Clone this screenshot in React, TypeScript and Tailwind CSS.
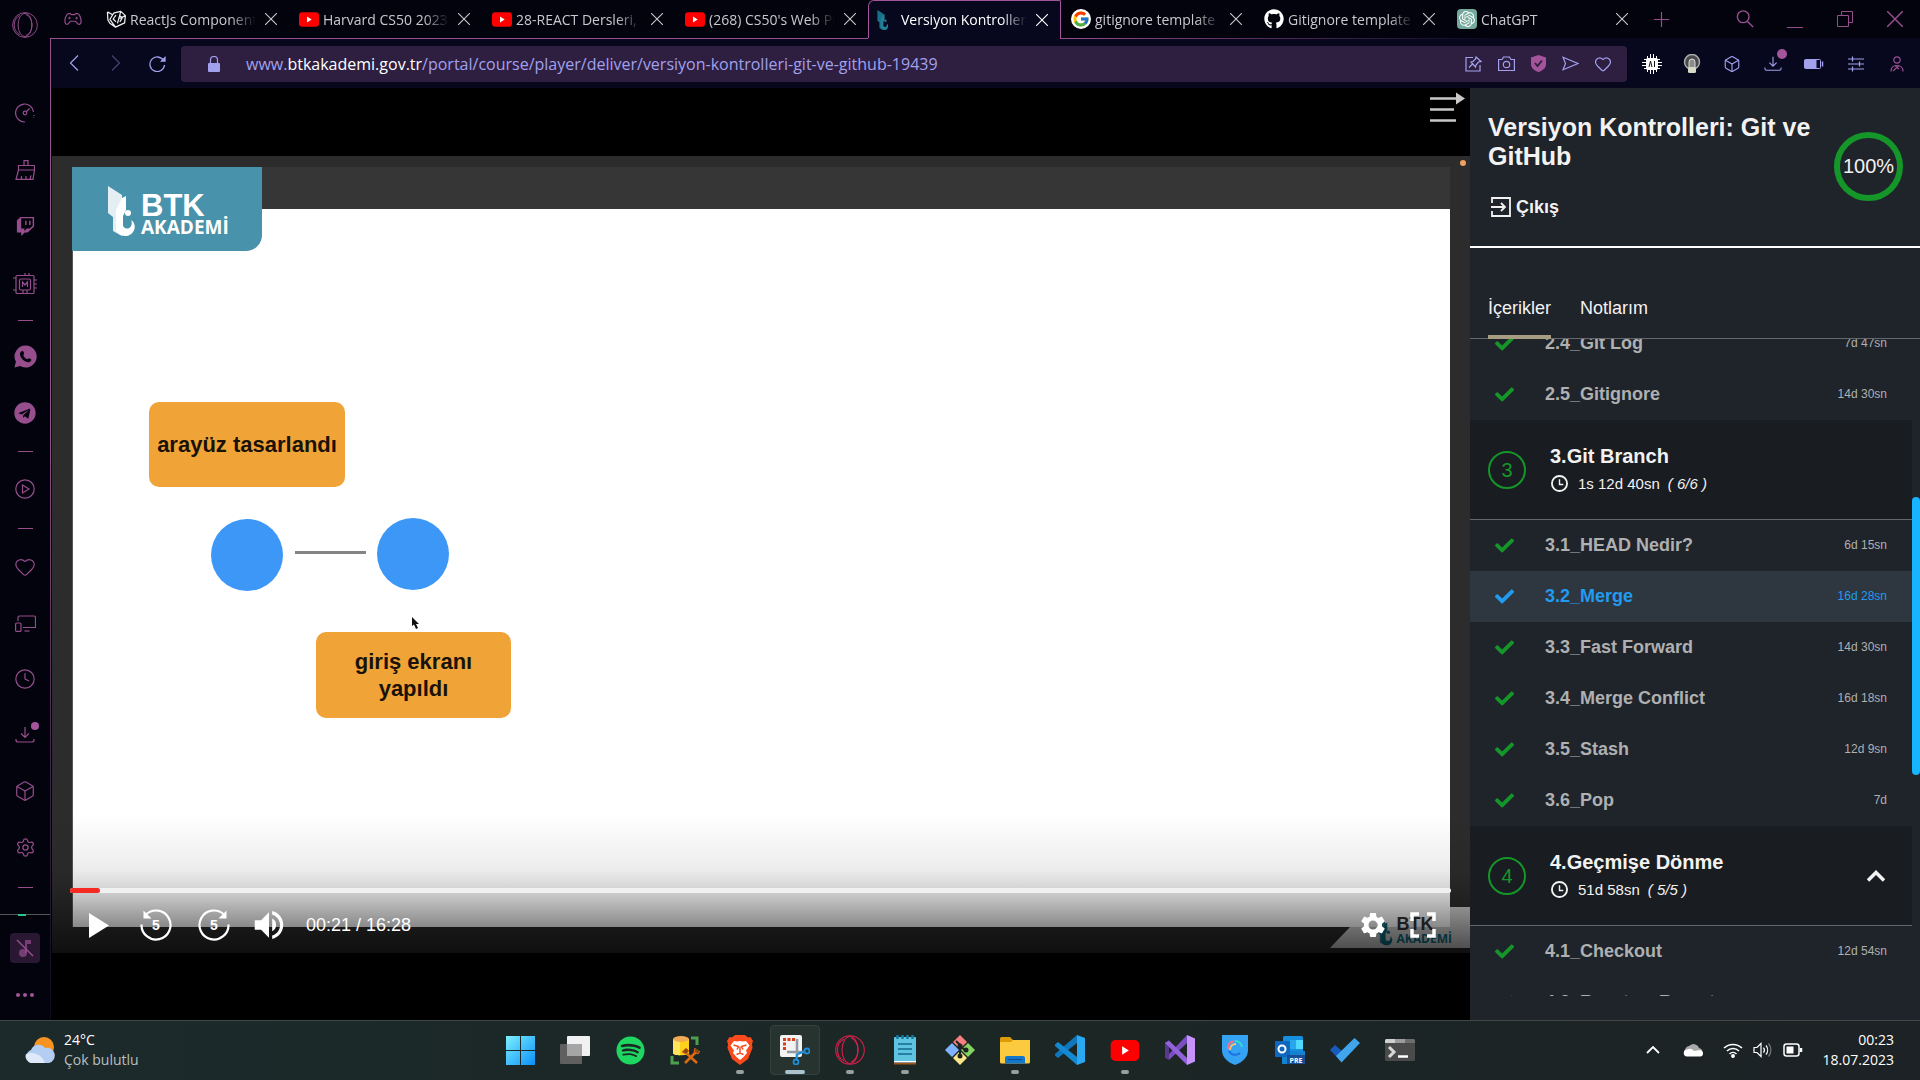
import React from "react";
import { FcGoogle } from "react-icons/fc";
import { FaGithub, FaSpotify, FaTelegram, FaTwitch, FaCheck } from "react-icons/fa";
import { SiOpenai } from "react-icons/si";
import { MdSettings, MdVolumeUp } from "react-icons/md";
import { Heart, Box, Clock, Settings } from "lucide-react";

type P = { className?: string };

const OperaRing = ({ className = "" }: P) => (
  <svg viewBox="0 0 30 30" className={className} fill="none" stroke="currentColor" strokeWidth="1.1">
    <circle cx="15" cy="15" r="14.300" />
    <ellipse cx="15" cy="15" rx="8" ry="13.500" />
    <path d="M16 3c4 1 7 6 7 12s-3 11-7 12M9 4c-4 2-6.500 6-6.500 11s2.500 9 6.500 11" />
  </svg>
);

const Gamepad = () => (
  <svg viewBox="0 0 20 14" className="h-[14px] w-[18px] text-[#964e8d]" fill="none" stroke="currentColor" strokeWidth="1.3">
    <path d="M5 1h2l1.200 1.200h3.600L13 1h2c2 0 4 5 4 8.500 0 2-1 3.500-2.500 3.500S14 10 12.500 9.500h-5C6 10 5 13 3.500 13S1 11.500 1 9.500C1 6 3 1 5 1Z" />
    <path d="M4.500 6h3M6 4.500v3M12.500 6h3M14 4.500v3" strokeWidth="1" />
  </svg>
);

const CodeLogo = () => (
  <svg viewBox="0 0 22 20" className="h-5 w-[21px]" fill="none" stroke="#f1f1f1" strokeWidth="1.300" strokeLinejoin="round">
    <path d="M1.500 2.500 7 5.500 4 10.500l6 8 9.500-4.500.8-7.500-4.800-4.500-7 1.500L7 5.500M1.500 2.500 2 11l2 3.500 6 4M20.300 6.500l-6 3M15.500 2 12 14.500M10.500 6 7.500 10l3 3M14.500 6.500 17 9l-2.500 4" />
  </svg>
);

const YouTube = ({ className = "" }: P) => (
  <svg viewBox="0 0 30 22" className={className}>
    <rect width="30" height="22" rx="5" fill="#f00" />
    <path d="m12 6.500 7 4.500-7 4.500z" fill="#fff" />
  </svg>
);

const BtkMark = ({ className = "" }: P) => (
  <svg viewBox="0 0 28 50" className={className} fill="currentColor">
    <path d="M0 0v27l5 4v14l9 5V9z" opacity=".85" />
    <path d="M14 12l4-2v14l-3 6v9c0 4 6 5 8 1 1-2 1-4 0-6 4 2 5 8 2 12-4 6-13 5-17-1V24z" />
    <circle cx="20" cy="27" r="3" />
  </svg>
);

const CloseX = ({ className = "" }: P) => (
  <svg viewBox="0 0 12 12" className={className} stroke="currentColor" strokeWidth="1.100">
    <path d="m0 0 12 12M12 0 0 12" />
  </svg>
);

const tabs: { title: string; icon: React.ReactNode; active?: boolean }[] = [
  { title: "ReactJs Component", icon: <CodeLogo /> },
  { title: "Harvard CS50 2023 –", icon: <YouTube className="h-[15px] w-5" /> },
  { title: "28-REACT Dersleri, R", icon: <YouTube className="h-[15px] w-5" /> },
  { title: "(268) CS50's Web Pr", icon: <YouTube className="h-[15px] w-5" /> },
  { title: "Versiyon Kontrolleri:", icon: <BtkMark className="h-5 w-3 text-[#1f8299]" />, active: true },
  { title: "gitignore template -", icon: <span className="rounded-full bg-white p-px"><FcGoogle size={18} /></span> },
  { title: "Gitignore template f", icon: <FaGithub size={20} color="#fff" /> },
  {
    title: "ChatGPT",
    icon: (
      <span className="flex h-5 w-5 items-center justify-center rounded bg-[#74aa9c]">
        <SiOpenai size={16} color="#fff" />
      </span>
    ),
  },
];

const TabStrip = () => (
  <>
    <div className="flex h-[38px] items-stretch">
      <button aria-label="GX Corner" className="flex w-[46px] items-center justify-center"><Gamepad /></button>
      {tabs.map((t) => (
        <div
          key={t.title}
          className={
            t.active
              ? "flex w-[193px] items-center rounded-tl-[6px] rounded-tr-[2px] border-x border-t border-[#a4549a] bg-[#07071d] pl-2 text-white"
              : "flex w-[193px] items-center pl-[10px] text-[#c9c9cd]"
          }
        >
          <span className="flex w-6 shrink-0 items-center">{t.icon}</span>
          <span className="w-[126px] overflow-hidden whitespace-nowrap text-[14px] [mask-image:linear-gradient(to_right,#000_80%,transparent)]">
            {t.title}
          </span>
          <button aria-label="Sekmeyi kapat" className="ml-2 p-px"><CloseX className="h-3 w-3" /></button>
        </div>
      ))}
      <button aria-label="Yeni sekme" className="ml-[14px] text-[#964e8d]">
        <svg viewBox="0 0 15 15" className="h-[15px] w-[15px]" stroke="currentColor" strokeWidth="1.200"><path d="M7.500 0v15M0 7.500h15" /></svg>
      </button>
      <div className="ml-auto flex items-center text-[#964e8d]">
        <button aria-label="Ara" className="flex w-[50px] justify-center">
          <svg viewBox="0 0 20 20" className="h-[18px] w-[18px]" fill="none" stroke="currentColor" strokeWidth="1.600"><circle cx="8" cy="7.500" r="6.500" /><path d="m12.500 12.500 6.500 6.500" /></svg>
        </button>
        <button aria-label="Küçült" className="flex h-6 w-[50px] items-end justify-center pb-[3px]"><span className="h-px w-4 bg-[#964e8d]" /></button>
        <button aria-label="Geri yükle" className="flex w-[50px] justify-center">
          <svg viewBox="0 0 16 16" className="h-4 w-4" fill="none" stroke="currentColor"><path d="M.5 4.500h11v11H.5zM4.500 4.500v-4h11v11h-4" /></svg>
        </button>
        <button aria-label="Kapat" className="flex w-[50px] justify-center"><CloseX className="h-4 w-4" /></button>
      </div>
    </div>
    <div className="flex h-px bg-[#07071d]">
      <div className="w-[818px] bg-[#964e8d]" />
      <div className="w-[192px]" />
      <div className="w-[440px] bg-linear-to-r from-[#964e8d] to-transparent" />
    </div>
  </>
);

const Download = ({ className = "" }: P) => (
  <svg viewBox="0 0 20 20" className={className} fill="none" stroke="currentColor" strokeWidth="1.200">
    <path d="M10 2v10M6 8.500l4 4 4-4M1 14v1a2 2 0 0 0 2 2h14a2 2 0 0 0 2-2v-1" />
  </svg>
);

const Toolbar = () => (
  <div className="flex h-[49px] items-center bg-[#07071d] text-[#a1a1ee]">
    <div className="flex w-[130px] items-center pb-px pl-[14px]">
      <button aria-label="Geri" className="flex w-10 justify-start pl-1">
        <svg viewBox="0 0 10 16" className="h-4 w-[10px]" fill="none" stroke="currentColor" strokeWidth="1.200"><path d="M9 .5 1.500 8 9 15.500" /></svg>
      </button>
      <button aria-label="İleri" className="flex w-11 justify-start pl-[6px] opacity-40">
        <svg viewBox="0 0 10 16" className="h-4 w-[10px]" fill="none" stroke="currentColor" strokeWidth="1.200"><path d="M1 .5 8.500 8 1 15.500" /></svg>
      </button>
      <button aria-label="Yenile">
        <svg viewBox="0 0 17 17" className="h-[17px] w-[17px]" fill="none" stroke="currentColor" strokeWidth="1.300"><path d="M14.500 5.500A7.300 7.300 0 1 0 15.500 10" /><path d="M12.500 6H16V2.500z" fill="currentColor" /></svg>
      </button>
    </div>
    <div className="flex h-9 flex-1 items-center rounded-[4px] bg-[#2e1e3f] pl-[27px] pr-2">
      <svg viewBox="0 0 12 16" className="mr-[26px] h-4 w-3"><rect y="7" width="12" height="9" rx="1" fill="currentColor" /><path d="M2.500 7V4a3.500 3.500 0 0 1 7 0v3" fill="none" stroke="currentColor" strokeWidth="1.200" /></svg>
      <p className="flex-1 whitespace-nowrap text-[16px]">
        www.<span className="text-white">btkakademi.gov.tr</span>/portal/course/player/deliver/versiyon-kontrolleri-git-ve-github-19439
      </p>
      <div className="flex items-center">
        <button aria-label="Sabitle" className="flex w-[33px] justify-center">
          <svg viewBox="0 0 17 16" className="h-4 w-[17px]" fill="none" stroke="currentColor" strokeWidth="1.200"><path d="M8 1.500H1v13.500h14V9M4 11.500 8 7.500M11 1l5 4.500-2.500.5L11 9l-.5 2L6 6l2-.500L10.500 3z" /></svg>
        </button>
        <button aria-label="Ekran görüntüsü" className="flex w-8 justify-center">
          <svg viewBox="0 0 17 15" className="h-[15px] w-[17px]" fill="none" stroke="currentColor" strokeWidth="1.200"><path d="M.6 3.500h3.500L5.500 1h6l1.400 2.500h3.500v11H.6z" /><circle cx="8.500" cy="8.500" r="3.200" /></svg>
        </button>
        <button aria-label="Reklam engelleyici" className="flex w-8 justify-center">
          <svg viewBox="0 0 15 17" className="h-[17px] w-[15px]" fill="none"><path d="M7.500 0 15 2.500V9c0 4-3 6.500-7.500 8C3 15.500 0 13 0 9V2.500z" fill="#a4549a" /><path d="m4 8 2.500 3L11 5.500" stroke="#2e1e3f" strokeWidth="1.800" /></svg>
        </button>
        <button aria-label="Gönder" className="flex w-[33px] justify-center">
          <svg viewBox="0 0 17 15" className="h-[15px] w-[17px]" fill="none" stroke="currentColor" strokeWidth="1.200"><path d="M1 1.200 16 7.500 1 13.800l2.500-6.300z" /></svg>
        </button>
        <button aria-label="Yer imi" className="flex w-8 justify-center"><Heart size={18} strokeWidth={1.600} /></button>
      </div>
    </div>
    <div className="flex items-center pl-1 pr-[3px]">
      <button aria-label="AI" className="flex w-[41px] justify-center">
        <svg viewBox="0 0 20 20" className="h-5 w-5" stroke="#fff" strokeWidth="1"><path d="M5.500 2v16M8.500 0v20M11.500 0v20M14.500 2v16M2 5.500h16M0 8.500h20M0 11.500h20M2 14.500h16" /><rect x="4.500" y="4.500" width="11" height="11" rx="1" fill="#fff" /><path d="m7 13 1.500-6L10 13M12.500 7v6" stroke="#111" fill="none" /></svg>
      </button>
      <button aria-label="Ampul" className="flex w-10 justify-center">
        <svg viewBox="0 0 18 20" className="h-5 w-[18px]"><circle cx="9" cy="8" r="7.500" fill="#4a4a4a" stroke="#aaa" strokeWidth="1.500" /><path d="M6 14V8a3 3 0 0 1 6 0v6z" fill="#8c8c8c" stroke="#d9d9d9" /><rect x="5" y="13" width="8" height="6" rx="1.500" fill="#d9d9c8" /></svg>
      </button>
      <button aria-label="Uzantılar" className="flex w-10 justify-center"><Box size={18} strokeWidth={1.500} /></button>
      <button aria-label="İndirilenler" className="relative flex w-[41px] justify-center">
        <Download className="h-[18px] w-[18px]" />
        <span className="absolute -top-[6px] right-[6px] h-[10px] w-[10px] rounded-full bg-[#a4549a]" />
      </button>
      <button aria-label="Pil" className="flex w-[41px] justify-center">
        <svg viewBox="0 0 20 10" className="h-[10px] w-5" fill="none" stroke="currentColor"><rect x=".5" y=".5" width="16" height="9" rx="1" /><path d="M1 1h11v8H1z" fill="currentColor" /><path d="M18.500 2.500v5" strokeWidth="1.500" /></svg>
      </button>
      <button aria-label="Ayarlar" className="flex w-[43px] justify-center">
        <svg viewBox="0 0 16 16" className="h-4 w-4" stroke="currentColor" strokeWidth="1.200"><path d="M0 3h16M0 8h16M0 13h16M4.500.5v5M11.500 5.500v5M4.500 10.500v5" /></svg>
      </button>
      <button aria-label="Profil" className="flex w-10 justify-center text-[#964e8d]">
        <svg viewBox="0 0 14 16" className="h-4 w-[14px]" fill="none" stroke="currentColor" strokeWidth="1.200"><circle cx="7" cy="4" r="3.200" /><path d="M1 15.500c0-4 2-6 6-6s6 2 6 6M5 9.500 9 13M9 9.500 3 15" /></svg>
      </button>
    </div>
  </div>
);

const Dash = ({ className = "" }: P) => (
  <div className={"flex items-center justify-center " + className}><span className="h-px w-[15px] bg-[#964e8d]" /></div>
);

const SideBtn = ({ label, tall, children }: { label: string; tall?: boolean; children: React.ReactNode }) => (
  <button aria-label={label} className={tall ? "flex h-[57px] w-full items-center justify-center" : "flex h-14 w-full items-center justify-center"}>
    {children}
  </button>
);

const Sidebar = () => (
  <aside className="flex w-[50px] shrink-0 flex-col bg-[#03030e] text-[#964e8d]">
    <button aria-label="Opera GX" className="flex h-[84px] items-start justify-center pt-3"><OperaRing className="h-[26px] w-[26px]" /></button>
    <SideBtn label="GX Control" tall>
      <svg viewBox="0 0 20 20" className="h-5 w-5" fill="none" stroke="currentColor" strokeWidth="1.200"><path d="M10 19A9 9 0 1 1 18.500 9" /><circle cx="10" cy="10" r="1.800" /><path d="m11.500 8.500 3-3M19 12v1M18.500 14.500v.5" /></svg>
    </SideBtn>
    <SideBtn label="Temizleyici" tall>
      <svg viewBox="0 0 20 20" className="h-5 w-5" fill="none" stroke="currentColor" strokeWidth="1.200"><path d="M9 5V.6h4V5M3.500 5.500h16V10h-16zM3.500 10 1 19.400h17l1.500-9.400M6.500 19.400V16M11 19.400V16M15 19.400l1-4" /></svg>
    </SideBtn>
    <SideBtn label="Twitch" tall>
      <FaTwitch size={19} />
    </SideBtn>
    <SideBtn label="Mods" tall>
      <svg viewBox="0 0 24 24" className="h-6 w-6" fill="none" stroke="currentColor" strokeWidth="1.200"><rect x="3" y="3.500" width="18" height="18" rx="1" /><rect x="6.500" y="7" width="11" height="11" rx="1.500" /><path d="M9.500 15v-5l2.500 3 2.500-3v5M12 3.500V1M16 3.500V1M21 8h3M21 12h3M21 16h3M3 6H0M3 18H0M10 21.500V18M14 21.500V18" /></svg>
    </SideBtn>
    <Dash className="h-4" />
    <SideBtn label="WhatsApp" tall>
      <svg viewBox="0 0 24 24" className="h-[23px] w-[23px]"><path d="M12.500.5a11.500 11.500 0 1 1-6 21.500L.500 23.500 2 17.500A11.500 11.500 0 0 1 12.500.5Z" fill="currentColor" /><path d="M8 6.500c1-.800 2 0 2.500 2 .3 1-.800 1.200-.8 2 .5 1.700 2 3.500 4 4.300 1 .2 1.200-1.300 2-1 1.800.7 2.800 1.200 2.300 2.200-1.200 2.500-3.500 2.500-6 1.300-3-1.500-5.500-4.500-5.800-7.300 0-1.800.6-2.700 1.800-3.500Z" fill="#03030e" /></svg>
    </SideBtn>
    <SideBtn label="Telegram"><FaTelegram size={22} /></SideBtn>
    <Dash className="h-5" />
    <SideBtn label="Oynatıcı">
      <svg viewBox="0 0 20 20" className="h-5 w-5" fill="none" stroke="currentColor" strokeWidth="1.200"><circle cx="10" cy="10" r="9.200" /><path d="m7.500 6 6.500 4-6.500 4z" /></svg>
    </SideBtn>
    <Dash className="h-[22px]" />
    <SideBtn label="Yer imleri"><Heart size={22} strokeWidth={1.300} /></SideBtn>
    <SideBtn label="Flow">
      <svg viewBox="0 0 21 17" className="h-[17px] w-[21px]" fill="none" stroke="currentColor" strokeWidth="1.200"><path d="M3 6V2.500A1.500 1.500 0 0 1 4.500 1H19a1.500 1.500 0 0 1 1.500 1.500v10H8" /><rect x=".6" y="8" width="5.400" height="8.400" rx="1" /><path d="M9.500 16h5" /></svg>
    </SideBtn>
    <SideBtn label="Geçmiş"><Clock size={22} strokeWidth={1.300} /></SideBtn>
    <button aria-label="İndirilenler" className="relative flex h-14 w-full items-center justify-center">
      <Download className="h-5 w-5" />
      <span className="absolute right-[11px] top-[15px] h-2 w-2 rounded-full bg-[#a4549a]" />
    </button>
    <SideBtn label="Uzantılar"><Box size={22} strokeWidth={1.300} /></SideBtn>
    <SideBtn label="Ayarlar"><Settings size={21} strokeWidth={1.400} /></SideBtn>
    <Dash className="h-[24px]" />
    <div className="mt-[15px] h-px bg-[#55555c]"><div className="ml-[18px] h-[2px] w-2 bg-[#2bc48a]" /></div>
    <button aria-label="Müziği aç" className="mx-auto mt-[18px] flex h-[30px] w-[30px] items-center justify-center rounded-[4px] bg-[#2a1833]">
      <svg viewBox="0 0 18 18" className="h-[18px] w-[18px]"><circle cx="7" cy="14" r="4" fill="currentColor" opacity=".7" /><path d="M9 14V1h6v4h-4v9z" fill="currentColor" opacity=".7" /><path d="m1 1 16 16" stroke="#964e8d" strokeWidth="1.500" /></svg>
    </button>
    <button aria-label="Daha fazla" className="mx-auto mt-[30px] flex gap-[3px]">
      <span className="h-1 w-1 rounded-full bg-[#a4549a]" /><span className="h-1 w-1 rounded-full bg-[#a4549a]" /><span className="h-1 w-1 rounded-full bg-[#a4549a]" />
    </button>
  </aside>
);

const Skip = ({ flip }: { flip?: boolean }) => (
  <svg viewBox="0 0 32 32" className="h-8 w-8">
    <g transform={flip ? "translate(32 0) scale(-1 1)" : undefined}>
      <path d="M1.500 15.500A14.500 14.500 0 1 0 6 5.500" fill="none" stroke="#fff" strokeWidth="2.200" />
      <path d="M3.500 1.500v8h8z" fill="#fff" />
    </g>
    <text x="16" y="21" textAnchor="middle" fontSize="14" fontWeight="700" fill="#fff">5</text>
  </svg>
);

const Video = () => (
  <main className="relative flex min-w-0 flex-1 items-center bg-black pt-px font-['Liberation_Sans',sans-serif]">
    <button aria-label="Menü" className="absolute right-[5px] top-1 z-10">
      <svg viewBox="0 0 36 32" className="h-8 w-9" fill="none" stroke="#c8c8c8" strokeWidth="2.500"><path d="M1 6.500h27M1 17.500h24M1 28.500h26" /><path d="M27 .5l9 6-9 6z" fill="#c8c8c8" stroke="none" /></svg>
    </button>
    <div className="relative aspect-video w-full overflow-hidden bg-[#2c2c2c]">
      <div className="flex h-full flex-col px-5 pb-[26px] pt-[11px]">
        <div className="h-[42px] bg-[#363636]" />
        <div className="flex-1 border-l border-[#555] bg-white" />
      </div>
      <div className="absolute left-5 top-[11px] flex h-[84px] w-[190px] items-start rounded-br-[16px] bg-[#4893ab] pl-9 pt-[19px] text-white">
        <BtkMark className="h-[50px] w-7" />
        <div className="ml-[5px] mt-[6px] font-bold">
          <p className="text-[31px] leading-7">BTK</p>
          <p className="font-['Open_Sans',sans-serif] text-[19px] leading-[14px]">AKADEMİ</p>
        </div>
      </div>
      <span className="absolute right-1 top-1 h-[6px] w-[6px] rounded-full bg-[#f0a060]" />
      <div className="absolute left-[97px] top-[246px] flex h-[85px] w-[196px] items-center justify-center rounded-[10px] bg-[#f0a437] text-[22px] font-bold text-[#1a1208]">arayüz tasarlandı</div>
      <div className="absolute left-[159px] top-[363px] h-[72px] w-[72px] rounded-full bg-[#3d97f7]" />
      <div className="absolute left-[243px] top-[395px] h-[3px] w-[71px] bg-[#858585]" />
      <div className="absolute left-[325px] top-[362px] h-[72px] w-[72px] rounded-full bg-[#3d97f7]" />
      <svg viewBox="0 0 8 12" className="absolute left-[360px] top-[461px] h-3 w-2"><path d="M0 0v9l2-1.500L4 12l2-1-2-4h3z" fill="#111" /></svg>
      <div className="absolute left-[264px] top-[476px] flex h-[86px] w-[195px] items-center justify-center rounded-[10px] bg-[#f0a437] text-center text-[22px] font-bold leading-[27px] text-[#1a1208]">
        giriş ekranı<br />yapıldı
      </div>
      <svg viewBox="0 0 140 42" className="absolute bottom-1 right-0 h-[42px] w-[140px]"><path d="M20 20h100V0h20v41H0z" fill="#cfcfcf" /></svg>
      <div className="absolute bottom-[6px] right-[18px] flex items-center text-[#0d6a7d]">
        <BtkMark className="h-8 w-4" />
        <div className="ml-1 font-bold">
          <p className="text-[18px] leading-4 text-[#333]">BTK</p>
          <p className="font-['Open_Sans',sans-serif] text-[12px] leading-[14px]">AKADEMİ</p>
        </div>
      </div>
      <div className="absolute inset-x-0 bottom-0 h-[140px] bg-[linear-gradient(to_bottom,transparent,rgba(0,0,0,0.05)_30%,rgba(0,0,0,0.08)_41%,rgba(0,0,0,0.17)_54%,rgba(0,0,0,0.46)_81%,rgba(0,0,0,0.65))]" />
      <div className="absolute inset-x-0 bottom-0 pb-[12px] pl-[18px] pr-[19px] text-white">
        <div className="h-[5px] rounded-full bg-[#f1f1f1]"><div className="h-[5px] w-[30px] rounded-full bg-[#f52a22]" /></div>
        <div className="mt-4 flex h-8 items-center">
          <button aria-label="Oynat" className="ml-[19px] w-5"><svg viewBox="0 0 20 25" className="h-[25px] w-5"><path d="M0 0v25l20-12.500z" fill="#fff" /></svg></button>
          <button aria-label="5 saniye geri" className="ml-[31px]"><Skip /></button>
          <button aria-label="5 saniye ileri" className="ml-[26px]"><Skip flip /></button>
          <button aria-label="Ses" className="ml-5"><MdVolumeUp size={38} /></button>
          <span className="ml-[18px] text-[18px]">00:21 / 16:28</span>
          <button aria-label="Ayarlar" className="ml-auto"><MdSettings size={30} /></button>
          <button aria-label="Tam ekran" className="ml-[22px] mr-[15px]">
            <svg viewBox="0 0 26 26" className="h-[26px] w-[26px]" fill="none" stroke="#fff" strokeWidth="3.500"><path d="M2 9V2h7M17 2h7v7M24 17v7h-7M9 24H2v-7" /></svg>
          </button>
        </div>
      </div>
    </div>
  </main>
);

const Lesson = ({ name, time, active }: { name: string; time: string; active?: boolean }) => (
  <li>
    <a
      href="#ders"
      className={
        active
          ? "flex h-[51px] items-center bg-[#2e3740] pl-[25px] pr-[25px] text-[#219bf0]"
          : "flex h-[51px] items-center pl-[25px] pr-[25px] text-[#aeb0b1]"
      }
    >
      <FaCheck size={19} className={active ? "text-[#219bf0]" : "text-[#149629]"} />
      <span className="ml-[31px] text-[18px] font-bold">{name}</span>
      <span className="ml-auto pb-px text-[12px]">{time}</span>
    </a>
  </li>
);

const Section = ({ n, title, time, count, open }: { n: string; title: string; time: string; count: string; open?: boolean }) => (
  <li className="flex h-[100px] items-center border-b border-[#64686b] bg-[#191c21] pl-[18px] pr-[27px]">
    <span className="flex h-[38px] w-[38px] items-center justify-center rounded-full border-2 border-[#149629] text-[20px] text-[#149629]">{n}</span>
    <div className="ml-6">
      <h2 className="text-[20px] font-bold leading-6 text-[#f2f2f2]">{title}</h2>
      <p className="mt-1 flex items-center text-[15px] leading-6 text-[#f2f2f2]">
        <svg viewBox="0 0 18 18" className="ml-px mr-[10px] h-[17px] w-[17px]" fill="none" stroke="currentColor" strokeWidth="2"><circle cx="9" cy="9" r="8" /><path d="M9 4.500V10h4" strokeWidth="1.500" /></svg>
        {time}<em className="ml-2">{count}</em>
      </p>
    </div>
    {open && (
      <button aria-label="Bölümü daralt" className="ml-auto">
        <svg viewBox="0 0 18 12" className="h-3 w-[18px]" fill="none" stroke="#f2f2f2" strokeWidth="3.500"><path d="m1 10.500 8-8 8 8" /></svg>
      </button>
    )}
  </li>
);

const Panel = () => (
  <section className="flex w-[450px] shrink-0 flex-col bg-[#1f232a] pb-6 font-['Liberation_Sans',sans-serif] text-[#f2f2f2]">
    <header className="flex h-[160px] shrink-0 border-b-2 border-white pl-[18px] pr-[17px] pt-[25px]">
      <div className="flex-1">
        <h1 className="w-[340px] text-[25px] font-bold leading-[29px]">Versiyon Kontrolleri: Git ve GitHub</h1>
        <a href="#cikis" className="mt-6 flex items-center text-[18px] font-bold leading-6">
          <svg viewBox="0 0 20 20" className="ml-[3px] mr-[5px] h-5 w-5" fill="none" stroke="currentColor" strokeWidth="1.800"><path d="M1 6V1h18v18H1v-5M0 10h13M10 6l4 4-4 4" /></svg>
          Çıkış
        </a>
      </div>
      <div className="mt-[19px] flex h-[69px] w-[69px] shrink-0 items-center justify-center rounded-full border-[6px] border-[#149629] pb-[2px] text-[20px]">100%</div>
    </header>
    <nav className="flex h-[91px] shrink-0 items-end gap-[29px] border-b border-[#64686b] pl-[18px] text-[18px]">
      <button className="-mb-px border-b-4 border-[#a69c80] pb-[15px] pt-2 leading-6">İçerikler</button>
      <button className="pb-[18px] leading-6">Notlarım</button>
    </nav>
    <div className="flex min-h-0 flex-1 overflow-hidden">
      <ul className="-mt-[21px] flex-1">
        <Lesson name="2.4_Git Log" time="7d 47sn" />
        <Lesson name="2.5_Gitignore" time="14d 30sn" />
        <Section n="3" title="3.Git Branch" time="1s 12d 40sn" count="( 6/6 )" />
        <Lesson name="3.1_HEAD Nedir?" time="6d 15sn" />
        <Lesson name="3.2_Merge" time="16d 28sn" active />
        <Lesson name="3.3_Fast Forward" time="14d 30sn" />
        <Lesson name="3.4_Merge Conflict" time="16d 18sn" />
        <Lesson name="3.5_Stash" time="12d 9sn" />
        <Lesson name="3.6_Pop" time="7d" />
        <Section n="4" title="4.Geçmişe Dönme" time="51d 58sn" count="( 5/5 )" open />
        <Lesson name="4.1_Checkout" time="12d 54sn" />
        <Lesson name="4.2_Reset ve Revert" time="9d 12sn" />
      </ul>
      <div className="w-2 pt-[158px]"><div className="h-[278px] rounded-full bg-[#18b4ff]" /></div>
    </div>
  </section>
);

const apps: { name: string; icon: React.ReactNode; dot?: boolean; active?: boolean }[] = [
  { name: "Başlat", icon: (
    <svg viewBox="0 0 29 29" className="h-[29px] w-[29px]"><defs><linearGradient id="win" x1="0" y1="0" x2="1" y2="1"><stop stopColor="#7df0ff" /><stop offset="1" stopColor="#0a90f8" /></linearGradient></defs><path fill="url(#win)" d="M0 0h14v14H0zM15 0h14v14H15zM0 15h14v14H0zM15 15h14v14H15z" /></svg>
  ) },
  { name: "Görev görünümü", icon: (
    <svg viewBox="0 0 30 28" className="h-7 w-[30px]"><rect x="7" width="23" height="20" rx="1" fill="#f1f1f1" /><rect y="8" width="22" height="20" rx="1" fill="#606060" /><path d="M7 8h15v12H7z" fill="#a5a5a5" /></svg>
  ) },
  { name: "Spotify", icon: <FaSpotify size={29} color="#1ed760" /> },
  { name: "SQL Araçları", icon: (
    <svg viewBox="0 0 30 30" className="h-[30px] w-[30px]"><path d="M3 4v14c0 3 16 3 16 0V4z" fill="#fbd21c" /><path d="M3 4v14c0 1.500 3 2.200 7 2.200V4z" fill="#ffe45e" /><ellipse cx="11" cy="4" rx="8" ry="3" fill="#f2ab55" /><path d="M21 3h6v7M2 21v7h7" fill="none" stroke="#4c9f4c" strokeWidth="3" /><path d="m15 28 12-12M14 16l13 12" stroke="#db6a10" strokeWidth="2.500" /><path d="m12 17 4-4 3 3-3 3zM25 13l-1 4 4 2 2-3" fill="#8a4b12" stroke="#db6a10" /></svg>
  ) },
  { name: "Brave", dot: true, icon: (
    <svg viewBox="0 0 26 30" className="h-[30px] w-[26px]"><path d="M8 0h10l3 2.500 2.500-.5L26 6l-1 3 .500 4-4.500 11-8 6-8-6L.500 13 1 9 0 6l2.500-4 2.500.500z" fill="#fb4a1c" /><path d="m7 6 3 .5 3-.500 3 .5 3-.500 3.500 4.500-3.500 5 1 2.500-3.500 4L13 25l-3.500-3L6 18l1-2.500-3.500-5z" fill="#fff" /><path d="m6.500 10 5 1.500-1.500 3M19.500 10l-5 1.500 1.500 3M13 12v6M9.500 19.500l3.500-1.500 3.500 1.500" fill="none" stroke="#fb4a1c" strokeWidth="1.500" /></svg>
  ) },
  { name: "Ekran Alıntısı Aracı", active: true, icon: (
    <svg viewBox="0 0 30 30" className="h-[30px] w-[30px]"><rect width="22" height="22" rx="2" fill="#f3f3f3" /><path d="M15 4.500H4.500V16" fill="none" stroke="#d8401c" strokeWidth="3" strokeDasharray="3 1.500" /><path d="M17 4v19M7 17h18" stroke="#8f9aa5" strokeWidth="2.500" /><circle cx="27" cy="16" r="2.500" fill="none" stroke="#1d8fd8" strokeWidth="1.800" /><circle cx="16" cy="27" r="2.500" fill="none" stroke="#1d8fd8" strokeWidth="1.800" /><path d="m18 19 6-2.500M17 19l-.500 5" stroke="#1d8fd8" strokeWidth="2" /></svg>
  ) },
  { name: "Opera GX", dot: true, icon: <OperaRing className="h-[30px] w-[30px] text-[#d81f4c]" /> },
  { name: "Not Defteri", dot: true, icon: (
    <svg viewBox="0 0 22 30" className="h-[30px] w-[22px]"><rect y="2" width="22" height="25" rx="1" fill="#5fc4e0" /><path d="M0 26h22v1.500H0z" fill="#fff" /><path d="M0 28h22v1.500H0z" fill="#a2541b" /><path d="M4 9h14M4 14h14M4 19h14" stroke="#14698c" strokeWidth="1.500" /><path d="M3.500 0v4M8.500 0v4M13.500 0v4M18.500 0v4" stroke="#17799e" strokeWidth="2.500" /></svg>
  ) },
  { name: "Git", icon: (
    <svg viewBox="0 0 30 30" className="h-[30px] w-[30px]"><path d="m15 0 7 7-7 7-7-7z" fill="#f77f7f" /><path d="m7 8 7 7-7 7-7-7z" fill="#80b3ff" /><path d="m23 8 7 7-7 7-7-7z" fill="#85d362" /><path d="m15 16 7 7-7 7-7-7z" fill="#fde68a" /><path d="m11 6 4 4v12M15 11l6 5" stroke="#1c2420" strokeWidth="2" fill="none" /><circle cx="15" cy="11" r="2.500" fill="#1c2420" /><circle cx="15" cy="21" r="2.500" fill="#1c2420" /><circle cx="21" cy="15" r="2.500" fill="#1c2420" /></svg>
  ) },
  { name: "Dosya Gezgini", dot: true, icon: (
    <svg viewBox="0 0 30 27" className="h-[27px] w-[30px]"><path d="M0 1.500A1.500 1.500 0 0 1 1.500 0H10l3 3h15v5H0z" fill="#dd9b08" /><path d="M0 5h11l2-2h17v22a1.500 1.500 0 0 1-1.500 1.500h-27A1.500 1.500 0 0 1 0 25z" fill="#fcca3f" /><path d="M5 26.500V21a2 2 0 0 1 2-2h16a2 2 0 0 1 2 2v5.500z" fill="#1277cc" /><path d="M8 22.500h14" stroke="#0b4f8f" /></svg>
  ) },
  { name: "Visual Studio Code", icon: (
    <svg viewBox="0 0 30 30" className="h-[30px] w-[30px]"><path d="m22 0 8 3v24l-8 3z" fill="#2aa8f2" /><path d="M22 0v8L3 23l-3-2.500V19z" fill="#0f77bb" /><path d="M22 30v-8L3 7 0 9.500V11z" fill="#1489d2" /></svg>
  ) },
  { name: "YouTube", dot: true, icon: <YouTube className="h-[21px] w-[30px]" /> },
  { name: "Visual Studio", icon: (
    <svg viewBox="0 0 30 30" className="h-[30px] w-[30px]"><path d="M0 7.500 4 5.500V25l-4-2z" fill="#56388f" /><path d="M4 25v-6L22 0v8z" fill="#7a4dc0" /><path d="M4 5.500 22 23v7L0 8z" fill="#9162d8" /><path d="m22 0 8 3.500v23L22 30z" fill="#c793fb" /></svg>
  ) },
  { name: "Hotspot Shield", icon: (
    <svg viewBox="0 0 26 30" className="h-[30px] w-[26px]"><path d="M0 0h26v15c0 7-5 12-13 15C5 27 0 22 0 15z" fill="#34a3f3" /><g fill="none" strokeWidth="2"><path d="M13 6a7 7 0 0 1 7 6" stroke="#33e0c8" /><path d="M18 18a7 7 0 0 1-11-2" stroke="#1f6fe0" /><path d="M6 14c-.5-4 2-7 6-8" stroke="#f0718c" /><path d="M8 15c0-4 3-6 6-6" stroke="#ffc46b" /></g></svg>
  ) },
  { name: "Outlook", icon: (
    <svg viewBox="0 0 30 29" className="h-[29px] w-[30px]"><path d="M8 1.500A1.500 1.500 0 0 1 9.500 0h17A1.500 1.500 0 0 1 28 1.500V16H8z" fill="#1490df" /><path d="M15 4h13v9H15z" fill="#50d9ff" /><path d="M15 4h6v9h-6z" fill="#28a8ea" /><path d="M7 15h23v13H7z" fill="#1483cf" /><rect y="5" width="15" height="16" rx="1" fill="#1067c0" /><circle cx="7" cy="13" r="3.500" fill="none" stroke="#fff" strokeWidth="2" /><path d="M12 19h18v9H12z" fill="#174e96" /><text x="21" y="26.500" textAnchor="middle" fontSize="7" fontWeight="700" fill="#fff">PRE</text></svg>
  ) },
  { name: "To Do", icon: (
    <svg viewBox="0 0 30 25" className="h-[25px] w-[30px]"><path d="m0 12 5-5 8 7-2.500 9z" fill="#185abd" /><path d="M6 18 24.500 0 30 5 11.500 24.500z" fill="#41a5ee" /></svg>
  ) },
  { name: "Terminal", icon: (
    <svg viewBox="0 0 30 22" className="h-[22px] w-[30px]"><rect width="30" height="22" rx="1.500" fill="#4a4a4a" /><path d="M0 1.500A1.500 1.500 0 0 1 1.500 0H10v4H0z" fill="#d0d0d0" /><path d="M10 0h10v4H10z" fill="#9c9c9c" /><path d="M20 0h8.500A1.500 1.500 0 0 1 30 1.500V4H20z" fill="#6d6d6d" /><path d="m4 8 5 5-5 5" fill="none" stroke="#d8d8d8" strokeWidth="3" /><path d="M13 17.500h10" stroke="#fff" strokeWidth="2.500" /></svg>
  ) },
];

const Taskbar = () => (
  <footer className="grid h-[60px] shrink-0 grid-cols-[1fr_auto_1fr] items-center border-t border-[#404847] bg-linear-to-r from-[#1c2a2b] via-[#1b2725] to-[#1c2225] pb-px text-[14px] leading-5 text-white">
    <button className="flex items-center pl-6 text-left">
      <svg viewBox="0 0 32 28" className="mr-2 h-7 w-8"><circle cx="20" cy="11" r="10" fill="#f79320" /><path d="M7 27a7 7 0 0 1 0-13 8 8 0 0 1 14-2 7.500 7.500 0 0 1 4 15z" fill="#b4cdf3" /><path d="M7 27a7 7 0 0 1-5-9c7-3 16 0 19 9z" fill="#dfe9fa" /></svg>
      <span>24°C<br /><span className="text-[#b9bfbe]">Çok bulutlu</span></span>
    </button>
    <div className="flex gap-[5px]">
      {apps.map((a) => (
        <button
          key={a.name}
          aria-label={a.name}
          className={
            a.active
              ? "relative flex h-[50px] w-[50px] items-center justify-center rounded-[4px] border border-[#35413f] bg-[#27332f]"
              : "relative flex h-[50px] w-[50px] items-center justify-center"
          }
        >
          {a.icon}
          {a.dot && <span className="absolute bottom-px left-[21px] h-1 w-2 rounded-full bg-[#97a09e]" />}
          {a.active && <span className="absolute bottom-0 left-[14px] h-1 w-5 rounded-full bg-[#a9c3cf]" />}
        </button>
      ))}
    </div>
    <div className="flex items-center justify-end pr-[26px]">
      <button aria-label="Gizli simgeler" className="flex w-10 justify-center">
        <svg viewBox="0 0 14 8" className="h-2 w-[14px]" fill="none" stroke="#fff" strokeWidth="1.800"><path d="m1 7 6-6 6 6" /></svg>
      </button>
      <button aria-label="OneDrive" className="flex w-10 justify-center">
        <svg viewBox="0 0 20 14" className="h-[14px] w-5"><path d="M4 12a5 5 0 0 1 2-9 6 6 0 0 1 10 2 4 4 0 0 1 3 6z" fill="#a9a9a9" /><path d="M4 13.500a3.500 3.500 0 0 1 .5-7C7 5 9 6 11 8l6-1c4 1 4 6 .5 6.500z" fill="#fff" /></svg>
      </button>
      <button aria-label="Ağ, ses ve pil" className="flex items-center gap-[10px] pl-[10px]">
        <svg viewBox="0 0 20 16" className="h-4 w-5" fill="none" stroke="#fff" strokeWidth="1.500"><path d="M1 6a13 13 0 0 1 18 0M4 9a8.500 8.500 0 0 1 12 0M6.500 12a5 5 0 0 1 7 0" /><circle cx="10" cy="14" r="1.200" fill="#fff" /></svg>
        <svg viewBox="0 0 20 16" className="h-4 w-5" fill="none" stroke="#fff" strokeWidth="1.200"><path d="M1 5.500h3L8 1.500v13l-4-4H1zM10.500 5.500a4 4 0 0 1 0 5M13 3.500a7 7 0 0 1 0 9" /><path d="M15.500 1.500a10 10 0 0 1 0 13" stroke="#777" /></svg>
        <svg viewBox="0 0 20 14" className="h-[14px] w-5" fill="none" stroke="#fff" strokeWidth="1.500"><rect x="1" y="1" width="15" height="12" rx="2.500" /><rect x="3.500" y="3.500" width="7" height="7" fill="#fff" stroke="none" /><path d="M18 5v4" strokeWidth="2.500" /></svg>
      </button>
      <time className="ml-5 text-right">00:23<br />18.07.2023</time>
    </div>
  </footer>
);

export default function App() {
  return (
    <div className="flex h-screen flex-col overflow-hidden bg-black font-['Open_Sans','Noto_Sans',sans-serif]">
      <div className="flex min-h-0 flex-1">
        <Sidebar />
        <div className="flex min-w-0 flex-1 flex-col bg-[#03030e]">
          <TabStrip />
          <div className="flex min-h-0 flex-1">
            <div className="w-px shrink-0 bg-linear-to-b from-[#964e8d] via-[#964e8d] via-40% to-[#0b0b1c]" />
            <div className="flex min-w-0 flex-1 flex-col">
              <Toolbar />
              <div className="flex min-h-0 flex-1 border-l border-black">
                <Video />
                <Panel />
              </div>
            </div>
          </div>
        </div>
      </div>
      <Taskbar />
    </div>
  );
}
